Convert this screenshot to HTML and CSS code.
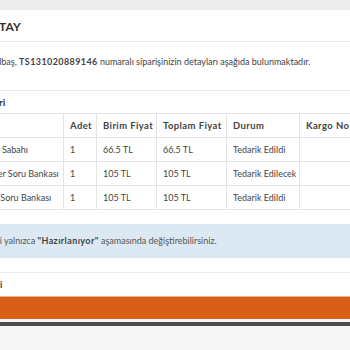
FILE: index.html
```html
<!DOCTYPE html>
<html lang="tr">
<head>
<meta charset="UTF-8">
<title>Sipariş Detay</title>
<link rel="stylesheet" href="styles.css">
</head>
<body>

<div class="topbar"></div>

<div class="page">
<div class="panel-heading">
<h3>SİPARİŞ DETAY</h3>
</div>

<div class="panel-body">
<p class="intro">Sayın Ahmet Kalbaş, <strong>TS131020889146</strong> numaralı siparişinizin detayları aşağıda bulunmaktadır.</p>

<div class="section-title">Sipariş Ürünleri</div>

<table class="items">
<thead>
<tr>
<th class="col-name">Ürün Adı</th>
<th class="col-qty">Adet</th>
<th class="col-unit">Birim Fiyat</th>
<th class="col-total">Toplam Fiyat</th>
<th class="col-state">Durum</th>
<th>Kargo No</th>
</tr>
</thead>
<tbody>
<tr>
<td>10. Sınıf Pazar Sabahı</td>
<td>1</td>
<td>66.5 TL</td>
<td>66.5 TL</td>
<td>Tedarik Edildi</td>
<td></td>
</tr>
<tr>
<td>İngilizce Master Soru Bankası</td>
<td>1</td>
<td>105 TL</td>
<td>105 TL</td>
<td>Tedarik Edilecek</td>
<td></td>
</tr>
<tr>
<td>Sosyal Bilgiler Soru Bankası</td>
<td>1</td>
<td>105 TL</td>
<td>105 TL</td>
<td>Tedarik Edildi</td>
<td></td>
</tr>
</tbody>
</table>

<div class="alert-info">Sipariş adresinizi yalnızca <strong>"Hazırlanıyor"</strong> aşamasında değiştirebilirsiniz.</div>

<div class="section-title delivery">Teslimat Bilgileri</div>
</div>

<div class="action-bar"></div>
</div>

<div class="footer-line"></div>

</body>
</html>
```

FILE: styles.css
```css
/* Reset */
* {
margin: 0;
padding: 0;
box-sizing: border-box;
}

body {
background-color: #f6f6f6;
color: #444;
font-family: Lato, 'Open Sans', sans-serif;
font-size: 9.5px;
overflow: hidden;
}

.topbar {
height: 10px;
background-color: #ececec;
}

/* Panel */
.page {
width: 760px;
margin-left: -78px;
background-color: #ffffff;
}

.panel-heading {
padding: 2px 15px 0;
border-bottom: 1px solid #ececec;
}

.panel-heading h3 {
font-size: 12px;
font-weight: 700;
line-height: 29px;
color: #333;
}

.panel-body {
padding: 11px 15px 0;
}

.intro {
font-size: 9px;
line-height: 17px;
margin-bottom: 20px;
}

.intro strong {
letter-spacing: 0.4px;
}

.section-title {
border-top: 1px solid #ececec;
line-height: 22px;
font-size: 10px;
font-weight: 700;
color: #333;
}

/* Items table */
.items {
border-collapse: collapse;
table-layout: fixed;
width: 100%;
}

.items th,
.items td {
height: 24px;
padding: 0 6px;
border: 1px solid #e4e4e4;
text-align: left;
white-space: nowrap;
overflow: hidden;
}

.items td {
font-size: 9px;
}

.items th {
font-weight: 700;
letter-spacing: 0.4px;
color: #444;
}

.col-name { width: 126px; }
.col-qty { width: 33px; }
.col-unit { width: 60px; }
.col-total { width: 70px; }
.col-state { width: 73px; }

.alert-info {
margin: 14px -15px 14px;
padding: 0 15px;
font-size: 9px;
line-height: 34px;
background-color: #dce9f3;
color: #555;
}

.alert-info strong {
letter-spacing: 0.4px;
color: #444;
}

.section-title.delivery {
font-size: 9px;
line-height: 23px;
}

.action-bar {
height: 23px;
background-color: #d95e18;
border-top: 1px solid #efb38e;
}

.footer-line {
height: 4px;
margin-top: 3px;
background-color: #4e4e4e;
}
```
